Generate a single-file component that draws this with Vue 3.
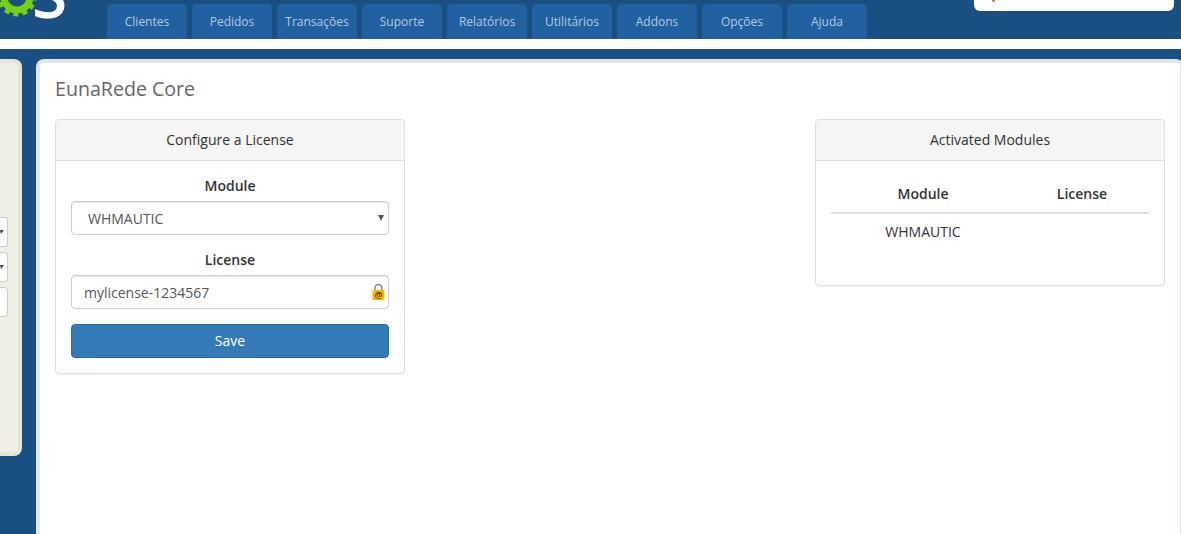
<script setup>
const tabs = ['Clientes', 'Pedidos', 'Transações', 'Suporte', 'Relatórios', 'Utilitários', 'Addons', 'Opções', 'Ajuda']
</script>

<template>
  <div class="page">
    <header class="topbar">
      <div class="logo">
        <svg class="gear" width="40" height="20" viewBox="0 0 40 20" aria-hidden="true">
          <circle cx="17" cy="-3" r="13" fill="none" stroke="#76cf14" stroke-width="7" />
          <circle cx="17" cy="-3" r="17.5" fill="none" stroke="#76cf14" stroke-width="4" stroke-dasharray="5 4.16" stroke-dashoffset="1.5" />
        </svg>
        <span class="logo-letter">S</span>
      </div>
      <nav class="tabs">
        <a v-for="tab in tabs" :key="tab" class="tab">{{ tab }}</a>
      </nav>
      <div class="search"><span class="search-dot"></span></div>
    </header>

    <main class="shell">
      <aside class="sidebar">
        <div class="side-field"><span class="side-caret"></span></div>
        <div class="side-field"><span class="side-caret"></span></div>
        <div class="side-field"></div>
      </aside>

      <section class="content">
        <h1 class="title">EunaRede Core</h1>
        <div class="panels">
          <div class="panel">
            <div class="panel-heading">Configure a License</div>
            <div class="panel-body">
              <div class="group">
                <label class="label">Module</label>
                <div class="select-wrap">
                  <select class="control select">
                    <option>WHMAUTIC</option>
                  </select>
                  <span class="caret"></span>
                </div>
              </div>
              <div class="group">
                <label class="label">License</label>
                <div class="select-wrap">
                  <input class="control" value="mylicense-1234567" />
                  <svg class="lock" width="13" height="17" viewBox="0 0 13 17" aria-hidden="true">
                    <path d="M3 7V4a3.5 3.5 0 0 1 7 0v3" fill="none" stroke="#777" stroke-width="1.3" />
                    <rect x="0.5" y="6" width="12" height="10" rx="1" fill="#f5b800" />
                    <text x="6.5" y="14" text-anchor="middle" class="lock-at">@</text>
                  </svg>
                </div>
              </div>
              <button class="save" type="button">Save</button>
            </div>
          </div>

          <div class="panel">
            <div class="panel-heading">Activated Modules</div>
            <div class="panel-body">
              <table class="table">
                <colgroup>
                  <col class="col-module" />
                  <col class="col-license" />
                </colgroup>
                <thead>
                  <tr>
                    <th>Module</th>
                    <th>License</th>
                  </tr>
                </thead>
                <tbody>
                  <tr>
                    <td>WHMAUTIC</td>
                    <td></td>
                  </tr>
                </tbody>
              </table>
            </div>
          </div>
        </div>
      </section>
    </main>
  </div>
</template>

<style>
html, body {
  margin: 0;
  background: #fff;
  overflow: hidden;
}
</style>

<style scoped>
.page {
  height: 534px;
  width: 1181px;
  display: flex;
  flex-direction: column;
  overflow: hidden;
  font-family: "Open Sans", "Noto Sans", sans-serif;
  font-size: 14px;
  line-height: 20px;
  color: #333;
}

.topbar {
  flex: none;
  height: 39px;
  display: flex;
  background: #1a4f82;
}

.logo {
  flex: none;
  width: 107px;
  height: 39px;
  position: relative;
  overflow: hidden;
}

.gear {
  position: absolute;
  left: 0;
  top: 0;
}

.logo-letter {
  position: absolute;
  left: 32px;
  top: -38px;
  font-size: 64px;
  line-height: 64px;
  font-weight: 600;
  color: #fff;
}

.tabs {
  display: flex;
  gap: 5px;
  padding-top: 4px;
}

.tab {
  width: 80px;
  height: 35px;
  display: flex;
  align-items: center;
  justify-content: center;
  border-radius: 5px 5px 0 0;
  background: #2161a1;
  color: #b4c9e0;
  font-size: 12px;
}

.search {
  margin-left: auto;
  margin-right: 7px;
  width: 200px;
  height: 11px;
  background: #fff;
  border-radius: 0 0 6px 6px;
  position: relative;
}

.search-dot {
  position: absolute;
  left: 18px;
  top: 0;
  width: 3px;
  height: 2px;
  background: #b9853f;
  border-radius: 0 0 2px 2px;
}

.shell {
  flex: 1;
  min-height: 0;
  margin-top: 10px;
  padding-top: 10px;
  display: flex;
  align-items: stretch;
  background: #1a4f82;
}

.sidebar {
  flex: none;
  box-sizing: border-box;
  width: 22px;
  height: 397px;
  padding-top: 154px;
  display: flex;
  flex-direction: column;
  gap: 5px;
  background: #efefe7;
  border: 4px solid #e6e4d5;
  border-left: 0;
  border-radius: 0 8px 8px 0;
}

.side-field {
  box-sizing: border-box;
  width: 8px;
  height: 30px;
  display: flex;
  align-items: center;
  background: #fff;
  border: 1px solid #ccc;
  border-left: 0;
  border-radius: 0 4px 4px 0;
}

.side-caret {
  width: 0;
  height: 0;
  border-top: 4px solid #444;
  border-left: 1px solid transparent;
  border-right: 3px solid transparent;
}

.content {
  flex: none;
  box-sizing: border-box;
  width: 1148px;
  margin-left: 14px;
  padding: 0 15px;
  background: #fff;
  border: 4px solid #e2e6eb;
  border-bottom: 0;
  border-radius: 8px 8px 0 0;
}

.title {
  margin: 13px 0 17px;
  font-size: 19.6px;
  line-height: 26px;
  font-weight: 400;
  color: #666;
}

.panels {
  display: flex;
  justify-content: space-between;
  align-items: flex-start;
}

.panel {
  box-sizing: border-box;
  width: 350px;
  background: #fff;
  border: 1px solid #ddd;
  border-radius: 4px;
  box-shadow: 0 1px 1px rgba(0, 0, 0, 0.05);
}

.panel-heading {
  box-sizing: border-box;
  height: 41px;
  padding: 10px 15px;
  text-align: center;
  background: #f5f5f5;
  border-bottom: 1px solid #ddd;
  border-radius: 3px 3px 0 0;
}

.panel-body {
  padding: 15px;
}

.group {
  margin-bottom: 15px;
}

.label {
  display: block;
  margin-bottom: 5px;
  text-align: center;
  font-weight: 600;
}

.select-wrap {
  position: relative;
}

.control {
  display: block;
  box-sizing: border-box;
  width: 100%;
  height: 34px;
  padding: 6px 12px;
  background: #fff;
  border: 1px solid #ccc;
  border-radius: 4px;
  box-shadow: inset 0 1px 1px rgba(0, 0, 0, 0.075);
  font: inherit;
  color: #555;
  outline: none;
}

.select {
  appearance: none;
  padding: 7px 12px 6px 16px;
}

.caret {
  position: absolute;
  right: 5px;
  top: 14px;
  width: 0;
  height: 0;
  border-top: 6px solid #555;
  border-left: 3.5px solid transparent;
  border-right: 3.5px solid transparent;
}

.lock {
  position: absolute;
  right: 4px;
  top: 9px;
}

.lock-at {
  font-size: 9px;
  font-weight: 600;
  fill: #4a3c08;
}

.save {
  display: block;
  box-sizing: border-box;
  width: 100%;
  height: 34px;
  padding: 6px 12px;
  background: #337ab7;
  border: 1px solid #2e6da4;
  border-radius: 4px;
  font: inherit;
  color: #fff;
}

.table {
  width: 100%;
  table-layout: fixed;
  border-collapse: collapse;
  margin-bottom: 20px;
}

.col-module {
  width: 184px;
}

.col-license {
  width: 134px;
}

.table th {
  padding: 8px;
  text-align: center;
  font-weight: 600;
  border-bottom: 2px solid #ddd;
}

.table td {
  padding: 8px;
  text-align: center;
}
</style>
